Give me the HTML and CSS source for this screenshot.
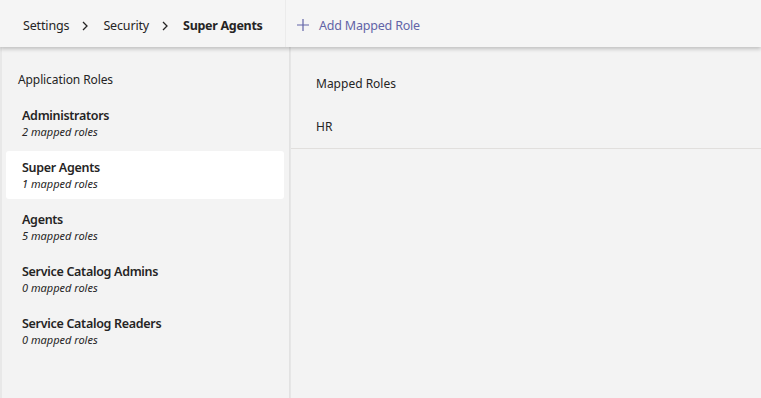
FILE: index.html
```html
<!DOCTYPE html>
<html>
<head>
<meta charset="utf-8">
<link rel="stylesheet" href="styles.css">
</head>
<body>
<div class="app">
  <header class="topbar">
    <nav class="crumbs">
      <span class="crumb">Settings</span>
      <svg class="chev" width="8" height="12" viewBox="0 0 8 12"><path d="M2 2 L6 6 L2 10" fill="none" stroke="#252424" stroke-width="1.3"/></svg>
      <span class="crumb">Security</span>
      <svg class="chev" width="8" height="12" viewBox="0 0 8 12"><path d="M2 2 L6 6 L2 10" fill="none" stroke="#252424" stroke-width="1.3"/></svg>
      <span class="crumb current">Super Agents</span>
    </nav>
    <button class="add">
      <svg width="14" height="14" viewBox="0 0 14 14"><path d="M7 1 V13 M1 7 H13" stroke="#6264a7" stroke-width="1.2" fill="none"/></svg>
      <span>Add Mapped Role</span>
    </button>
  </header>
  <main class="body">
    <aside class="roles">
      <div class="roles-title">Application Roles</div>
      <ul class="role-list">
        <li class="role"><div class="role-name">Administrators</div><div class="role-sub">2 mapped roles</div></li>
        <li class="role selected"><div class="role-name">Super Agents</div><div class="role-sub">1 mapped roles</div></li>
        <li class="role"><div class="role-name">Agents</div><div class="role-sub">5 mapped roles</div></li>
        <li class="role"><div class="role-name">Service Catalog Admins</div><div class="role-sub">0 mapped roles</div></li>
        <li class="role"><div class="role-name">Service Catalog Readers</div><div class="role-sub">0 mapped roles</div></li>
      </ul>
    </aside>
    <section class="mapped">
      <div class="mapped-head">Mapped Roles</div>
      <div class="mapped-row">HR</div>
    </section>
  </main>
</div>
</body>
</html>
```
FILE: styles.css
```css
* { box-sizing: border-box; }
html, body { margin: 0; padding: 0; }
body {
  font-family: "Noto Sans", "Open Sans", sans-serif;
  color: #252424;
  background: #f3f2f1;
  width: 761px;
  height: 398px;
  overflow: hidden;
}
.app { display: flex; flex-direction: column; height: 398px; }
.topbar {
  position: relative;
  z-index: 2;
  height: 47px;
  background: #f5f5f5;
  display: flex;
  align-items: center;
  box-shadow: 0 2px 4px rgba(0,0,0,0.22);
}
.crumbs {
  display: flex;
  align-items: center;
  height: 47px;
  padding: 3px 0 0 23px;
  width: 286px;
  border-right: 1px solid #ebebeb;
  font-size: 12.5px;
  letter-spacing: -0.15px;
}
.crumb { color: #252424; }
.chev { margin: 1px 14px 0 12px; }
.crumb.current { font-weight: 700; letter-spacing: -0.3px; }
.add {
  display: flex;
  align-items: center;
  gap: 9px;
  border: 0;
  background: none;
  padding: 3px 0 0 10px;
  font: inherit;
  font-size: 12.5px;
  letter-spacing: -0.2px;
  color: #6264a7;
}
.body { flex: 1; display: flex; background: #f3f3f3; }
.roles {
  width: 290px;
  border-left: 2px solid #e8e8e8;
  border-right: 1px solid #e2e2e2;
  padding: 24px 4px 0 4px;
}
.roles-title { font-size: 12px; letter-spacing: -0.1px; padding-left: 12px; height: 18px; line-height: 18px; margin-bottom: 10px; }
.role-list { list-style: none; margin: 0; padding: 0; }
.role {
  height: 48px;
  margin-bottom: 4px;
  padding: 8px 0 0 16px;
  border-radius: 3px;
}
.role.selected { background: #ffffff; width: 278px; }
.role-name { font-size: 12.5px; font-weight: 600; letter-spacing: -0.3px; line-height: 17px; }
.role-sub { font-size: 11px; font-style: italic; line-height: 16px; color: #252424; }
.mapped { flex: 1; border-left: 1px solid #e6e6e6; }
.mapped-head { font-size: 12px; height: 59px; padding: 28px 0 0 25px; }
.mapped-row { font-size: 12px; height: 43px; padding: 12px 0 0 25px; border-bottom: 1px solid #e1dfdd; }
```
